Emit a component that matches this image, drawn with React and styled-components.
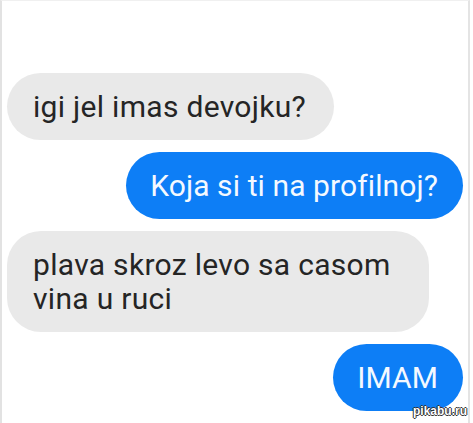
import React from "react";
import styled, { createGlobalStyle } from "styled-components";

const Global = createGlobalStyle`
  html, body { margin: 0; padding: 0; background: #ffffff; }
  body { width: 473px; height: 423px; overflow: hidden; font-family: Roboto, "Noto Sans", "Liberation Sans", sans-serif; }
`;

const Screen = styled.div`
  position: relative;
  box-sizing: border-box;
  width: 470px;
  height: 423px;
  border-left: 2px solid #e2e2e2;
  border-right: 2px solid #e4e4e4;
  border-top: 1px solid #f0f0f0;
  padding: 72px 5px 0 5px;
  display: flex;
  flex-direction: column;
  gap: 12px;
  background: #fff;
`;

const Row = styled.div`
  display: flex;
  justify-content: ${(p) => (p.$mine ? "flex-end" : "flex-start")};
`;

const Bubble = styled.div`
  box-sizing: border-box;
  max-width: ${(p) => (p.$mine ? "380px" : "422px")};
  padding: ${(p) => (p.$mine ? "17px 25px 16px 24px" : "17px 28px 16px 26px")};
  border-radius: 34px;
  font-size: 30px;
  line-height: 34px;
  letter-spacing: ${(p) => (p.$mine ? "0.1px" : "0.3px")};
  background: ${(p) => (p.$mine ? "#0d7ef6" : "#e9e9e9")};
  color: ${(p) => (p.$mine ? "#f4f9ff" : "#252525")};
`;

const Watermark = styled.div`
  position: absolute;
  right: 1px;
  bottom: 5px;
  font-family: "Liberation Sans", Arial, sans-serif;
  font-size: 12px;
  font-weight: bold;
  color: #fff;
  text-shadow: -1px 0 #333, 1px 0 #333, 0 -1px #333, 0 1px #333;
`;

const messages = [
  { mine: false, text: "igi jel imas devojku?" },
  { mine: true, text: "Koja si ti na profilnoj?" },
  { mine: false, text: "plava skroz levo sa casom vina u ruci" },
  { mine: true, text: "IMAM" },
];

export default function App() {
  return (
    <>
      <Global />
      <Screen>
        {messages.map((m, i) => (
          <Row key={i} $mine={m.mine}>
            <Bubble $mine={m.mine}>{m.text}</Bubble>
          </Row>
        ))}
        <Watermark>pikabu.ru</Watermark>
      </Screen>
    </>
  );
}
